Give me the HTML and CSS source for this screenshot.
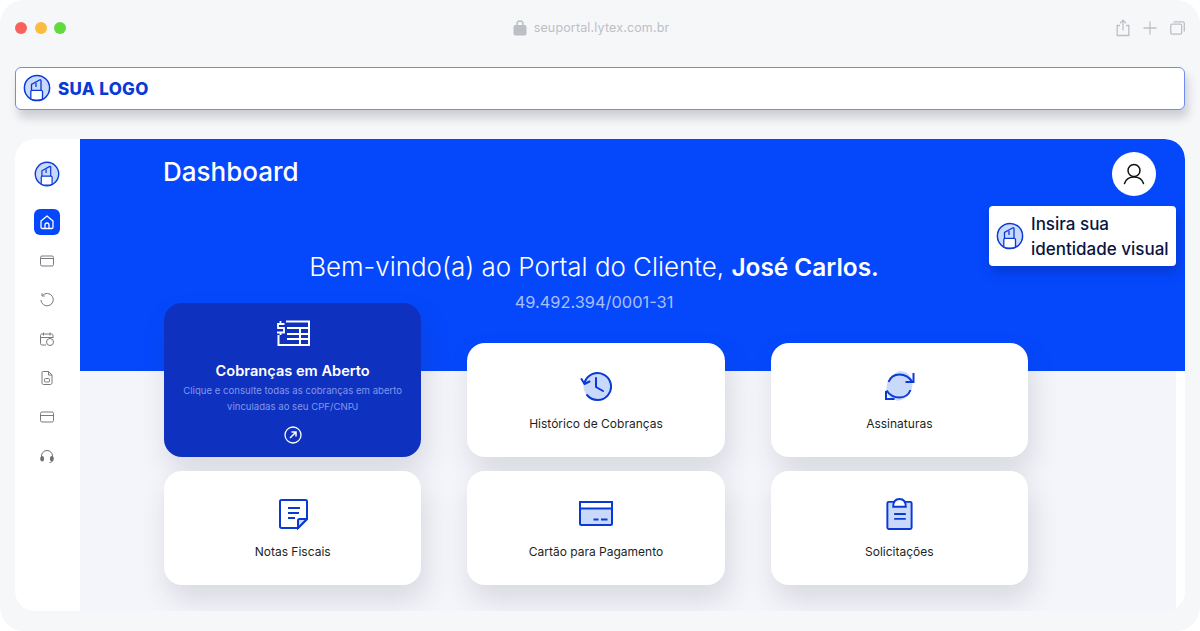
FILE: index.html
```html
<!DOCTYPE html>
<html lang="pt-BR">
<head>
    <meta charset="UTF-8">
    <meta name="viewport" content="width=device-width, initial-scale=1.0">
    <title>Portal do Cliente</title>
    <link rel="stylesheet" href="styles.css">
</head>
<body>
    <svg class="sprites" width="0" height="0">
        <symbol id="logo" viewBox="0 0 28 28">
            <circle cx="14" cy="14" r="12.6" fill="#c9d9fc" stroke="#0a3ad6" stroke-width="1.5"/>
            <path d="M8.5 16.5V10.5L17 5.8C17.5 5.6 18 6 18 6.6V16.5" fill="#c9d9fc" stroke="#0a3ad6" stroke-width="1.3"/>
            <path d="M13 9V13" fill="none" stroke="#0a3ad6" stroke-width="1.3"/>
            <path d="M7.8 17.5C7.8 16.8 8.3 16.3 9 16.3H18.3C19 16.3 19.5 16.8 19.5 17.5V25C17.5 26.4 9.8 26.4 7.8 25Z" fill="#fff" stroke="#0a3ad6" stroke-width="1.3"/>
        </symbol>
    </svg>

    <div class="window">
        <!-- Barra do navegador -->
        <div class="browser-bar">
            <div class="dots">
                <span class="dot red"></span>
                <span class="dot yellow"></span>
                <span class="dot green"></span>
            </div>
            <div class="address">
                <svg width="14" height="16" viewBox="0 0 14 16"><path d="M4 6V4a3 3 0 0 1 6 0v2" fill="none" stroke="#bcc0c6" stroke-width="1.5"/><rect x="0.5" y="5" width="13" height="10.5" rx="2" fill="#bcc0c6"/></svg>
                <span>seuportal.lytex.com.br</span>
            </div>
            <div class="browser-actions">
                <svg width="14" height="18" viewBox="0 0 14 18" fill="none" stroke="#bcc0c6" stroke-width="1.3"><path d="M4 6.5H1.2V16.5H12.8V6.5H10"/><path d="M7 11.5V1.5M4 4.2 7 1.2l3 3"/></svg>
                <svg width="14" height="14" viewBox="0 0 14 14" fill="none" stroke="#bcc0c6" stroke-width="1.3"><path d="M7 0.5V13.5M0.5 7H13.5"/></svg>
                <svg width="15" height="14" viewBox="0 0 15 14" fill="none" stroke="#bcc0c6" stroke-width="1.3"><rect x="0.7" y="3.2" width="11" height="10" rx="1.5"/><path d="M3.5 0.8H12.8C13.6 0.8 14.3 1.5 14.3 2.3V10.5"/></svg>
            </div>
        </div>

        <!-- Logo -->
        <div class="logo-bar">
            <svg class="logo-icon" width="28" height="28"><use href="#logo"/></svg>
            <span class="logo-text">SUA LOGO</span>
        </div>

        <div class="app">
            <!-- Menu lateral -->
            <nav class="sidebar">
                <svg class="side-logo" width="26" height="26"><use href="#logo"/></svg>
                <a class="side-item active">
                    <svg width="16" height="16" viewBox="0 0 16 16" fill="none" stroke="#fff" stroke-width="1.3" stroke-linejoin="round"><path d="M2 7 8 2l6 5v6.2c0 .8-.6 1.3-1.3 1.3H3.3c-.7 0-1.3-.5-1.3-1.3Z"/><path d="M6 14.5V11a2 2 0 0 1 4 0v3.5"/></svg>
                </a>
                <a class="side-item">
                    <svg width="16" height="16" viewBox="0 0 16 16" fill="none" stroke="#777a80" stroke-width="1"><rect x="1.5" y="3" width="13" height="10" rx="1.5"/><path d="M1.5 5.5H14.5"/></svg>
                </a>
                <a class="side-item">
                    <svg width="16" height="16" viewBox="0 0 16 16" fill="none" stroke="#777a80" stroke-width="1"><path d="M3.4 3.6A6.2 6.2 0 1 1 1.9 8"/><path d="M3 1.2V4h2.8"/></svg>
                </a>
                <a class="side-item">
                    <svg width="16" height="16" viewBox="0 0 16 16" fill="none" stroke="#777a80" stroke-width="1"><path d="M7 14H2.8c-.7 0-1.3-.6-1.3-1.3V4.3C1.5 3.6 2.1 3 2.8 3H12.700c.7 0 1.3.6 1.3 1.3V7"/><path d="M1.5 6.5H14M4.5 1.5V4.5M11 1.5V4.5"/><circle cx="11" cy="11" r="3.5"/></svg>
                </a>
                <a class="side-item">
                    <svg width="16" height="16" viewBox="0 0 16 16" fill="none" stroke="#777a80" stroke-width="1"><path d="M4 1.5H9.5L13 5V13c0 .8-.7 1.5-1.5 1.5h-7C3.7 14.5 3 13.8 3 13V2.5C3 2 3.4 1.5 4 1.5Z"/><path d="M9.5 1.5V5H13"/><rect x="5.5" y="8.5" width="5" height="3.5" rx="1"/></svg>
                </a>
                <a class="side-item">
                    <svg width="16" height="16" viewBox="0 0 16 16" fill="none" stroke="#777a80" stroke-width="1"><rect x="1.5" y="3" width="13" height="10" rx="1.5"/><path d="M1.5 6.5H14.5"/></svg>
                </a>
                <a class="side-item">
                    <svg width="16" height="16" viewBox="0 0 16 16" fill="none" stroke="#6d7075" stroke-width="1"><path d="M2.5 10V8a5.5 5.5 0 0 1 11 0v2"/><rect x="1.8" y="8.5" width="2.7" height="4.5" rx="1.2" fill="#6d7075"/><rect x="11.5" y="8.5" width="2.7" height="4.5" rx="1.2" fill="#6d7075"/><path d="M13 13c0 1-1 1.5-2.5 1.5"/></svg>
                </a>
            </nav>

            <main class="content">
                <section class="hero">
                    <header class="hero-top">
                        <h1>Dashboard</h1>
                        <div class="avatar">
                            <svg width="24" height="24" viewBox="0 0 24 24" fill="none" stroke="#111" stroke-width="1.5" stroke-linecap="round"><circle cx="12" cy="8.5" r="6"/><path d="M2.5 21.5C4 17 8 15 12 15s8 2 9.5 6.5"/></svg>
                        </div>
                    </header>
                    <div class="welcome">
                        <p class="welcome-text">Bem-vindo(a) ao Portal do Cliente, <strong>José Carlos.</strong></p>
                        <p class="welcome-doc">49.492.394/0001-31</p>
                    </div>
                    <div class="visual-tip">
                        <svg width="28" height="28"><use href="#logo"/></svg>
                        <span>Insira sua<br>identidade visual</span>
                    </div>
                </section>

                <section class="cards">
                    <a class="card featured">
                        <svg width="34" height="26" viewBox="0 0 34 26" fill="none" stroke="#fff" stroke-width="2"><path d="M10 1.5H33V25H2.5V15"/><path d="M11 8H33M11 14H33M11 19H33M24 8V25"/><path d="M8.5 4H2V8H8V12.5H1M4.5 1V3M4.5 13V15" stroke-width="1.8"/></svg>
                        <h2>Cobranças em Aberto</h2>
                        <p>Clique e consulte todas as cobranças em aberto<br>vinculadas ao seu CPF/CNPJ</p>
                        <svg class="go" width="18" height="18" viewBox="0 0 18 18" fill="none" stroke="#fff" stroke-width="1.3"><circle cx="9" cy="9" r="8"/><path d="M6 12 12 6M7.5 6H12V10.5" stroke-width="1.5"/></svg>
                    </a>
                    <a class="card">
                        <svg width="32" height="32" viewBox="0 0 32 32" fill="none" stroke="#0a3ad6" stroke-width="2"><circle cx="17" cy="16" r="13.5" fill="#c9d9fc" stroke="none"/><path d="M4.5 13A13.5 13.5 0 1 1 7 25" stroke-linecap="round"/><path d="M1.5 9 4.5 14 9.5 11.5" stroke-linecap="round" stroke-linejoin="round"/><path d="M16 8V17L23 21" stroke-linecap="round"/></svg>
                        <span class="card-label">Histórico de Cobranças</span>
                    </a>
                    <a class="card">
                        <svg width="32" height="32" viewBox="0 0 32 32" fill="none" stroke="#0a3ad6" stroke-width="2"><ellipse cx="16.5" cy="16" rx="12.5" ry="15" fill="#c9d9fc" stroke="none" transform="rotate(25 16.5 16)"/><path d="M5.5 12C7.5 7 11 4.5 16.5 4.5 22 4.5 26.5 7.5 29.5 12"/><path d="M30.5 3V12H22.5"/><path d="M27.5 20C25.5 25 22 27.5 16.5 27.5 11 27.5 6.5 25 3.5 20.5"/><path d="M3 21V29H11.5"/></svg>
                        <span class="card-label">Assinaturas</span>
                    </a>
                    <a class="card">
                        <svg width="30" height="30" viewBox="0 0 30 30" fill="none" stroke="#0a3ad6" stroke-width="2"><path d="M3.5 1H27.5C28.3 1 29 1.7 29 2.5V20L20 29H3.5C2.7 29 2 28.3 2 27.5V2.5C2 1.7 2.7 1 3.5 1Z"/><path d="M20 29V21.5C20 20.7 20.7 20 21.5 20H29Z" fill="#c9d9fc"/><path d="M10 9H22M10 14H21M10 19H17"/></svg>
                        <span class="card-label">Notas Fiscais</span>
                    </a>
                    <a class="card">
                        <svg width="34" height="26" viewBox="0 0 34 26" fill="none" stroke="#0a3ad6" stroke-width="2"><rect x="1" y="1" width="32" height="23" rx="1.5" fill="#c9d9fc"/><path d="M1 1H33V7.5H1Z" fill="#fff"/><path d="M14.5 18.5H19.5M22 18.5H28.5"/></svg>
                        <span class="card-label">Cartão para Pagamento</span>
                    </a>
                    <a class="card">
                        <svg width="28" height="33" viewBox="0 0 28 33" fill="none" stroke="#0a3ad6" stroke-width="2"><rect x="2" y="4" width="25" height="28" rx="1.5" fill="#c9d9fc"/><path d="M8 9C8 4 10.5 1 14.5 1s6.5 3 6.500 8Z" fill="#fff"/><path d="M9 16.5H21M9 21.5H21"/></svg>
                        <span class="card-label">Solicitações</span>
                    </a>
                </section>
            </main>
        </div>
    </div>
</body>
</html>
```

FILE: styles.css
```css
* {
    box-sizing: border-box;
}

body {
    margin: 0;
    background: #fff;
    font-family: Inter, "Open Sans", sans-serif;
    overflow: hidden;
}

.sprites {
    display: block;
}

.window {
    width: 1200px;
    height: 631px;
    padding: 0 15px;
    background: #f6f7f9;
    border-radius: 24px;
    overflow: hidden;
}

/* Barra do navegador */
.browser-bar {
    height: 66.5px;
    padding-bottom: 11px;
    display: grid;
    grid-template-columns: 1fr auto 1fr;
    align-items: center;
}

.dots {
    display: flex;
    gap: 7.5px;
}

.dot {
    width: 12px;
    height: 12px;
    border-radius: 50%;
}

.red { background: #f9625c; }
.yellow { background: #fcbc40; }
.green { background: #62d93f; }

.address {
    padding-right: 18px;
    display: flex;
    align-items: center;
    gap: 7px;
    font-size: 12.5px;
    letter-spacing: 0.15px;
    color: #bcc0c6;
}

.browser-actions {
    display: flex;
    justify-content: flex-end;
    align-items: center;
    gap: 13px;
}

/* Logo */
.logo-bar {
    height: 43px;
    padding-left: 7px;
    display: flex;
    align-items: center;
    gap: 7px;
    background: #fff;
    border: 1px solid #6f8cf0;
    border-radius: 6px;
    box-shadow: 3px 8px 10px rgba(40, 50, 70, 0.2);
    font-size: 17px;
    font-weight: 800;
    letter-spacing: 0.3px;
    color: #0a3ad6;
}

.logo-text {
    padding-top: 2px;
}

.app {
    margin-top: 29.5px;
    height: 472px;
    display: flex;
    background: #fff;
    border-radius: 20px;
    overflow: hidden;
}

/* Menu lateral */
.sidebar {
    width: 65px;
    flex: none;
    padding: 22px 1px 0 0;
    display: flex;
    flex-direction: column;
    align-items: center;
}

.side-logo {
    margin-bottom: 22px;
}

.side-item {
    width: 26px;
    height: 26px;
    margin-bottom: 13px;
    display: flex;
    justify-content: center;
    align-items: center;
    border-radius: 6px;
}

.side-item.active {
    background: #0548fc;
}

.content {
    flex: 1;
    min-width: 0;
    background: linear-gradient(to right, #f4f5fa 1096px, #fff 1096px);
}

/* Topo azul */
.hero {
    position: relative;
    height: 232px;
    padding: 13px 29.5px 0 83px;
    background: #0548fc;
    border-radius: 0 20px 0 0;
    color: #fff;
}

.hero-top {
    display: flex;
    justify-content: space-between;
    align-items: flex-start;
}

.hero-top h1 {
    margin: 0;
    padding-top: 3px;
    font-size: 26px;
    font-weight: 500;
    line-height: 34px;
}

.avatar {
    width: 44px;
    height: 44px;
    display: flex;
    justify-content: center;
    align-items: center;
    background: #fff;
    border-radius: 50%;
}

.welcome {
    width: 862px;
    margin-top: 54px;
    text-align: center;
}

.welcome-text {
    margin: 0;
    font-size: 25.9px;
    font-weight: 300;
    line-height: 34px;
}

.welcome-text strong {
    font-size: 24.4px;
    font-weight: 600;
}

.welcome-doc {
    margin: 7px 0 0;
    font-size: 16.4px;
    font-weight: 400;
    line-height: 22px;
    color: #a9bffc;
}

.visual-tip {
    position: absolute;
    top: 67px;
    right: 9px;
    width: 187px;
    height: 60px;
    padding: 0 0 0 7px;
    display: flex;
    align-items: center;
    gap: 7px;
    background: #fff;
    border-radius: 4px;
    box-shadow: 2px 6px 12px rgba(8, 30, 120, 0.35);
    font-size: 17px;
    font-weight: 500;
    line-height: 25px;
    color: #0b1440;
}

.visual-tip span {
    padding-top: 2px;
}

/* Cards */
.cards {
    position: relative;
    width: 864px;
    margin: -68.5px 0 0 84px;
    display: grid;
    grid-template-columns: repeat(3, 1fr);
    grid-template-rows: 154px 114px;
    column-gap: 46px;
    row-gap: 14px;
}

.card {
    height: 114px;
    align-self: end;
    padding-top: 27px;
    display: flex;
    flex-direction: column;
    align-items: center;
    background: #fff;
    border-radius: 18px;
    box-shadow: 4px 14px 28px rgba(40, 50, 70, 0.14);
}

.card svg {
    height: 32px;
}

.card-label {
    margin-top: 14px;
    font-size: 12px;
    line-height: 16px;
    color: #1c1f26;
}

.card.featured {
    height: 154px;
    padding-top: 14px;
    background: #0f31c0;
    color: #fff;
}

.featured h2 {
    margin: 13px 0 0;
    font-size: 14.6px;
    font-weight: 600;
    line-height: 18px;
}

.featured p {
    margin: 3px 0 0;
    font-size: 9.6px;
    line-height: 16px;
    text-align: center;
    color: #8197ec;
}

.card .go {
    height: 18px;
    margin-top: 11px;
}
```
